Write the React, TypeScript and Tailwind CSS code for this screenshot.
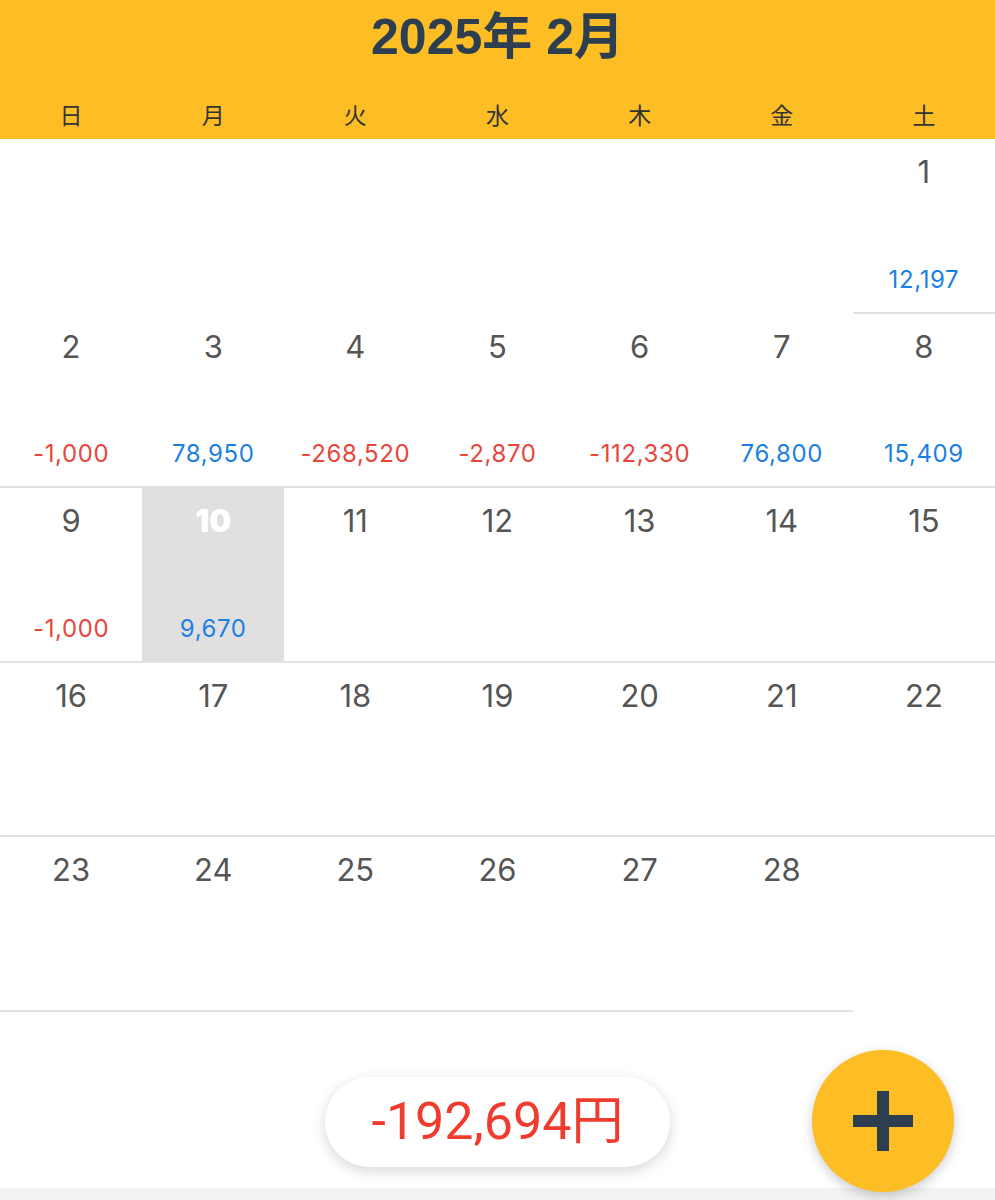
import React from 'react';

type Day = { day: number; amount?: number; today?: boolean };

const WEEKDAYS = ['日', '月', '火', '水', '木', '金', '土'];

// February 2025 starts on a Saturday
const DAYS: (Day | null)[] = [
  null, null, null, null, null, null, { day: 1, amount: 12197 },
  { day: 2, amount: -1000 }, { day: 3, amount: 78950 }, { day: 4, amount: -268520 },
  { day: 5, amount: -2870 }, { day: 6, amount: -112330 }, { day: 7, amount: 76800 },
  { day: 8, amount: 15409 },
  { day: 9, amount: -1000 }, { day: 10, amount: 9670, today: true }, { day: 11 }, { day: 12 },
  { day: 13 }, { day: 14 }, { day: 15 },
  { day: 16 }, { day: 17 }, { day: 18 }, { day: 19 }, { day: 20 }, { day: 21 }, { day: 22 },
  { day: 23 }, { day: 24 }, { day: 25 }, { day: 26 }, { day: 27 }, { day: 28 }, null,
];

const fmt = (n: number) => n.toLocaleString('en-US');

const DayCell: React.FC<{ item: Day | null }> = ({ item }) => {
  if (!item) return <div className="h-[174.5px]" />;
  return (
    <div
      className={`h-[174.5px] border-b-2 border-[#e2e2e2] flex flex-col items-center pt-[14px] pb-[18px] ${
        item.today ? 'bg-[#e0e0e0]' : 'bg-white'
      }`}
    >
      <span
        className={`text-[31px] leading-[38px] ${
          item.today ? 'text-white font-black' : 'text-[#555555]'
        }`}
      >
        {item.day}
      </span>
      {item.amount !== undefined && (
        <span
          className={`mt-auto text-[24px] leading-[28px] tracking-[0.6px] ${
            item.amount < 0 ? 'text-[#e8463b]' : 'text-[#1c80e3]'
          }`}
        >
          {fmt(item.amount)}
        </span>
      )}
    </div>
  );
};

const App: React.FC = () => {
  return (
    <div
      className="relative w-[995px] h-[1200px] overflow-hidden bg-white flex flex-col"
      style={{ fontFamily: 'Inter, "Noto Sans CJK JP", sans-serif' }}
    >
      <header className="bg-[#fdbd24] h-[139px] flex flex-col">
        <h1
          className="pt-[8px] text-center text-[50px] leading-[58px] font-bold text-[#2c3e50]"
          style={{ fontFamily: '"Liberation Sans", "Noto Sans CJK JP", sans-serif' }}
        >
          2025年 2月
        </h1>
        <div className="grid grid-cols-7 mt-[33px]">
          {WEEKDAYS.map((w) => (
            <div
              key={w}
              className="text-center text-[23px] leading-[30px] text-[#333333]"
              style={{ fontFamily: '"Noto Sans CJK JP", sans-serif' }}
            >
              {w}
            </div>
          ))}
        </div>
      </header>

      <div className="grid grid-cols-7">
        {DAYS.map((d, i) => (
          <DayCell key={i} item={d} />
        ))}
      </div>

      <div className="flex-1 flex justify-center pt-[65px]">
        <div className="h-[90px] w-[345px] rounded-full bg-white shadow-[0_4px_14px_rgba(0,0,0,0.16)] flex items-center justify-center">
          <span
            className="text-[52px] leading-none text-[#f03b2f]"
            style={{ fontFamily: 'Roboto, "Noto Sans CJK JP", sans-serif' }}
          >
            -192,694円
          </span>
        </div>
      </div>

      <div className="h-[12px] bg-[#f2f2f2]" />

      <button className="absolute left-[812px] top-[1050px] w-[142px] h-[142px] rounded-full bg-[#fdbd24] shadow-[0_4px_12px_rgba(0,0,0,0.2)] flex items-center justify-center">
        <svg width="60" height="60" viewBox="0 0 60 60">
          <rect x="24" y="0" width="12" height="60" fill="#2c3e50" />
          <rect x="0" y="24" width="60" height="12" fill="#2c3e50" />
        </svg>
      </button>
    </div>
  );
};

export default App;
